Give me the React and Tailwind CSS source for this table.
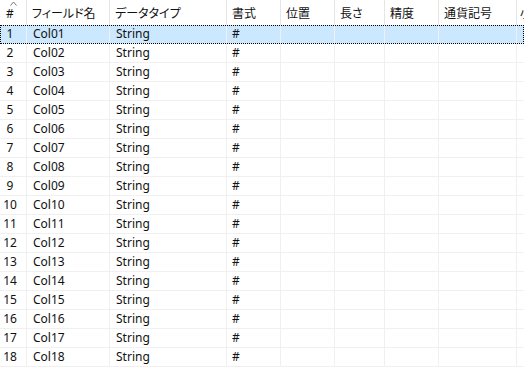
import React from "react";

const cols = [
  { w: "w-[27px]", label: "#" },
  { w: "w-[83px]", label: "フィールド名" },
  { w: "w-[117px]", label: "データタイプ" },
  { w: "w-[54px]", label: "書式" },
  { w: "w-[54px]", label: "位置" },
  { w: "w-[50px]", label: "長さ" },
  { w: "w-[54px]", label: "精度" },
  { w: "w-[78px]", label: "通貨記号" },
];

const rows = Array.from({ length: 18 }, (_, i) => {
  const n = i + 1;
  return [String(n), "Col" + String(n).padStart(2, "0"), "String", "#", "", "", "", ""];
});

export default function App() {
  return (
    <div
      className="w-[524px] h-[367px] overflow-hidden bg-white text-[12px] text-[#111] [font-feature-settings:'palt']"
      style={{ fontFamily: '"Noto Sans", "Noto Sans CJK JP", sans-serif' }}
    >
      <div className="flex h-[25px] w-[600px]">
        {cols.map((c, i) => (
          <div
            key={i}
            className={`${c.w} shrink-0 h-full border-r border-[#e5e5e5] relative flex items-center ${i === 0 ? "justify-center pr-[6px]" : "pl-[5px]"}`}
          >
            {i === 0 && (
              <svg
                className="absolute left-[10px] top-[1px]"
                width="7"
                height="5"
                viewBox="0 0 7 5"
              >
                <path d="M0.5 4.5 L3.5 1 L6.5 4.5" fill="none" stroke="#777" strokeWidth="1" />
              </svg>
            )}
            <span className="leading-none pt-[3px]">{c.label}</span>
          </div>
        ))}
        <div className="w-[80px] shrink-0 h-full flex items-center pl-[3px]">
          <span className="leading-none pt-[3px]">小数</span>
        </div>
      </div>
      {rows.map((r, ri) => (
        <div
          key={ri}
          className={`flex h-[19px] w-[524px] border-b border-[#f0f0f0] ${
            ri === 0 ? "bg-[#cce8ff] outline-1 outline-dotted outline-black -outline-offset-1" : ""
          }`}
        >
          {cols.map((c, i) => (
            <div
              key={i}
              className={`${c.w} shrink-0 h-full border-r border-[#f0f0f0] flex items-center ${i === 0 ? "justify-center pr-[6px]" : i === 3 ? "pl-[5px]" : "pl-[6px]"}`}
            >
              <span className="leading-none">{r[i]}</span>
            </div>
          ))}
          <div className="flex-1 h-full" />
        </div>
      ))}
    </div>
  );
}
